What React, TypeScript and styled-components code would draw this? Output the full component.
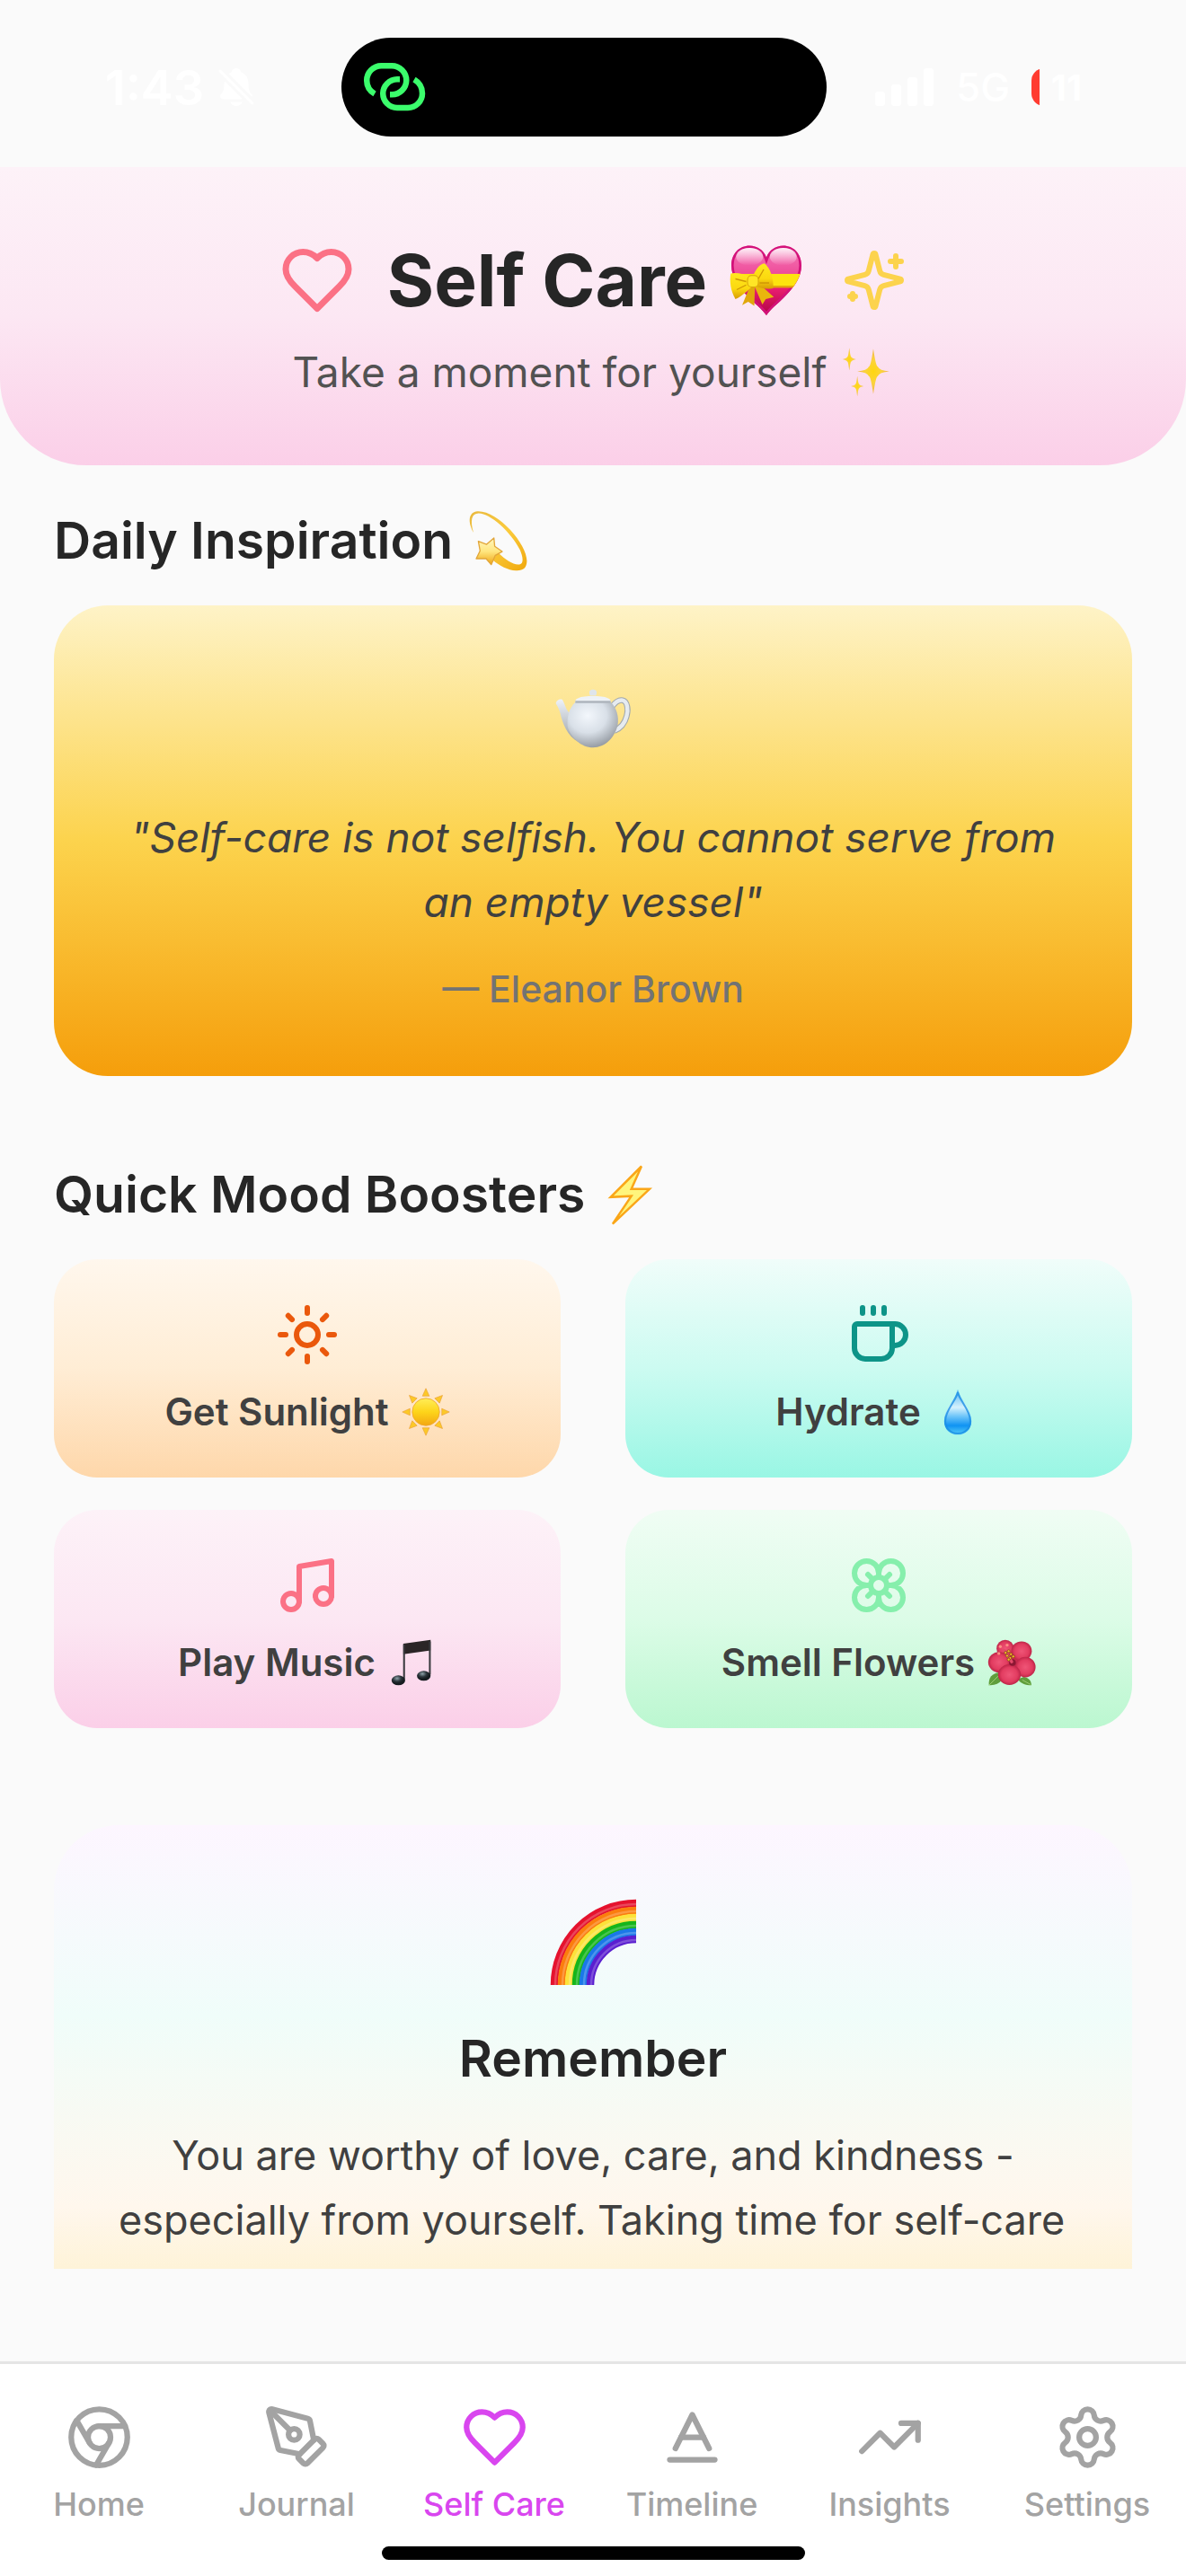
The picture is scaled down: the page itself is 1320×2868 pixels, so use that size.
import React from "react";
import styled, { createGlobalStyle } from "styled-components";
import { Baseline, Chromium, Coffee, Flower, Music, PenTool, Settings, Sun, TrendingUp } from "lucide-react";
import { IoNotificationsOff } from "react-icons/io5";

const color = {
  page: "#fafafa",
  ink: "#262626",
  body: "#404040",
  soft: "#525252",
  muted: "#737373",
  faint: "#a3a3a3",
  accent: "#d946ef",
  rose: "#fb7185",
  line: "#e5e5e5",
};

const GlobalStyle = createGlobalStyle`
  *, *::before, *::after { box-sizing: border-box; }
  body {
    margin: 0;
    background: ${color.page};
    font-family: Inter, "Liberation Sans", sans-serif;
    color: ${color.ink};
  }
  h1, h2, p, blockquote, figure { margin: 0; }
  svg { display: block; flex: none; }
`;

const Screen = styled.div`
  display: flex;
  flex-direction: column;
  min-height: 100vh;
`;

/* ---------- status bar ---------- */

const StatusBar = styled.div`
  display: grid;
  grid-template-columns: 19fr 540px 20fr;
  align-items: center;
  height: 186px;
  padding-top: 8px;
  color: #ffffff;
  font-weight: 600;
`;

const StatusLeft = styled.div`
  display: flex;
  align-items: center;
  justify-content: center;
  gap: 12px;
  padding-left: 24px;
  font-size: 54px;
`;

const StatusRight = styled.div`
  display: flex;
  align-items: center;
  gap: 24px;
  padding-left: 54px;
  font-size: 44px;
  font-weight: 500;
`;

const Island = styled.div`
  display: flex;
  align-items: center;
  height: 110px;
  padding-left: 22px;
  border-radius: 55px;
  background: #000000;
`;

const Battery = styled.div`
  display: flex;
  align-items: center;
  justify-content: center;
  width: 78px;
  height: 42px;
  border-radius: 14px;
  background: linear-gradient(90deg, #ff3b30 9px, transparent 9px);
  font-size: 40px;
  font-weight: 700;
`;

/* ---------- header ---------- */

const Header = styled.header`
  display: flex;
  flex-direction: column;
  align-items: center;
  gap: 18px;
  padding: 72px 60px 74px;
  border-radius: 0 0 96px 96px;
  background: linear-gradient(#fdf2f8, #fce7f3 50%, #fbcfe8);
`;

const TitleRow = styled.div`
  display: flex;
  align-items: center;
  gap: 36px;
`;

const Title = styled.h1`
  display: flex;
  align-items: center;
  gap: 18px;
  font-size: 80px;
  line-height: 108px;
  font-weight: 700;
`;

const Subtitle = styled.p`
  display: flex;
  align-items: center;
  gap: 14px;
  font-size: 46px;
  line-height: 60px;
  color: ${color.soft};
`;

/* ---------- content ---------- */

const Content = styled.main`
  display: flex;
  flex-direction: column;
  flex: 1;
  gap: 96px;
  padding: 48px 60px 102px;
`;

const Section = styled.section`
  display: flex;
  flex-direction: column;
  gap: 36px;
`;

const SectionTitle = styled.h2`
  display: flex;
  align-items: center;
  gap: 14px;
  font-size: 57px;
  line-height: 72px;
  font-weight: 600;
`;

const QuoteCard = styled.figure`
  display: flex;
  flex-direction: column;
  align-items: center;
  padding: 72px;
  border-radius: 60px;
  background: linear-gradient(#fef3c7, #fcd34d 50%, #f59e0b);
  text-align: center;
`;

const QuoteArt = styled.div`
  display: flex;
  align-items: center;
  height: 108px;
  margin-bottom: 42px;
`;

const Quote = styled.blockquote`
  font-size: 46px;
  line-height: 72px;
  font-style: italic;
  color: ${color.body};
`;

const Author = styled.figcaption`
  margin-top: 36px;
  font-size: 41px;
  line-height: 50px;
  font-weight: 500;
  color: ${color.muted};
`;

const BoosterGrid = styled.div`
  display: grid;
  grid-template-columns: 1fr 1fr;
  gap: 36px 72px;
`;

const Booster = styled.button<{ $from: string; $mid: string; $to: string; $tint: string }>`
  display: flex;
  flex-direction: column;
  align-items: center;
  gap: 24px;
  padding: 48px 24px;
  border: 0;
  border-radius: 48px;
  background: linear-gradient(${(p) => p.$from}, ${(p) => p.$mid} 50%, ${(p) => p.$to});
  color: ${(p) => p.$tint};
  font-family: inherit;
  cursor: pointer;
`;

const BoosterLabel = styled.span`
  display: flex;
  align-items: center;
  gap: 14px;
  height: 51px;
  font-size: 42px;
  line-height: 51px;
  font-weight: 600;
  color: ${color.body};
`;

const RememberCard = styled.section`
  display: flex;
  flex-direction: column;
  align-items: center;
  margin-top: 12px;
  padding: 72px 72px 18px;
  border-radius: 72px 72px 0 0;
  background: linear-gradient(#fdf6ff, #f0fdfa 43%, #fff7ed 86%, #fef3d8);
`;

const RememberArt = styled.div`
  display: flex;
  align-items: center;
  height: 116px;
  margin-bottom: 36px;
`;

const RememberText = styled.p`
  align-self: stretch;
  margin-top: 36px;
  overflow: hidden;
  font-size: 45px;
  line-height: 72px;
  color: ${color.body};
  text-align: center;
`;

const CutLine = styled.span`
  display: block;
  text-align: left;
  white-space: nowrap;
`;

/* ---------- tab bar ---------- */

const TabBar = styled.footer`
  border-top: 3px solid ${color.line};
  padding: 44px 0 18px;
  background: #ffffff;
`;

const Tabs = styled.nav`
  display: flex;
`;

const Tab = styled.a<{ $active?: boolean }>`
  display: flex;
  flex: 1;
  flex-direction: column;
  align-items: center;
  gap: 15px;
  font-size: 36px;
  line-height: 45px;
  font-weight: 500;
  text-decoration: none;
  color: ${(p) => (p.$active ? color.accent : color.faint)};
`;

const HomeIndicator = styled.div`
  width: 471px;
  height: 15px;
  margin: 24px auto 0;
  border-radius: 8px;
  background: #000000;
`;

/* ---------- line icons ---------- */

const stroke = {
  fill: "none",
  stroke: "currentColor",
  strokeWidth: 2,
  strokeLinecap: "round" as const,
  strokeLinejoin: "round" as const,
};

const HeartIcon = ({ size, tint = "currentColor" }: { size: number; tint?: string }) => (
  <svg width={size} height={size} viewBox="0 0 24 24" {...stroke} stroke={tint} aria-hidden="true">
    <path d="M19 14c1.49-1.46 3-3.21 3-5.5A5.5 5.5 0 0 0 16.5 3c-1.76 0-3 .5-4.5 2-1.5-1.5-2.74-2-4.5-2A5.5 5.5 0 0 0 2 8.5c0 2.3 1.5 4.05 3 5.5l7 7Z" />
  </svg>
);

const SparklesIcon = () => (
  <svg width={72} height={72} viewBox="0 0 24 24" {...stroke} stroke="#fcd34d" aria-hidden="true">
    <path d="M9.937 15.5A2 2 0 0 0 8.5 14.063l-6.135-1.582a.5.5 0 0 1 0-.962L8.5 9.936A2 2 0 0 0 9.937 8.5l1.582-6.135a.5.5 0 0 1 .963 0L14.063 8.5A2 2 0 0 0 15.5 9.937l6.135 1.581a.5.5 0 0 1 0 .964L15.5 14.063a2 2 0 0 0-1.437 1.437l-1.582 6.135a.5.5 0 0 1-.963 0z" />
    <path d="M20 3v4M22 5h-4M4 17v2M5 18H3" />
  </svg>
);

const LinkIcon = () => (
  <svg width={74} height={60} viewBox="401 67 74 60" fill="none" stroke="#3bfd6c" strokeWidth={6.5} aria-hidden="true">
    <path d="M416 104.500C410 101 407.200 96 407.200 89.500A16.300 16.300 0 0 1 423.500 73.200H435A16.300 16.300 0 0 1 451.300 89.500A16 16 0 0 1 435.300 105.200H433" />
    <path d="M444 88.300H441A16 16 0 0 0 425.200 104A16 16 0 0 0 441 120H453A16 16 0 0 0 469 104C469 98 466 92 460 88.500" />
  </svg>
);

const SignalIcon = () => (
  <svg width={66} height={42} viewBox="0 0 66 42" fill="currentColor" aria-hidden="true">
    <rect x="0" y="26" width="11" height="16" rx="3" />
    <rect x="18" y="18" width="11" height="24" rx="3" />
    <rect x="36" y="10" width="11" height="32" rx="3" />
    <rect x="54" y="0" width="11" height="42" rx="3" />
  </svg>
);

/* ---------- emoji drawings ---------- */

type EmojiProps = { size: number; label: string; children: React.ReactNode };

const Emoji = ({ size, label, children }: EmojiProps) => (
  <svg width={size} height={size} viewBox="0 0 64 64" role="img" aria-label={label}>
    {children}
  </svg>
);

const star4 = (x: number, y: number, w: number, h: number) => {
  const a = w * 0.27;
  const b = h * 0.22;
  return `M${x} ${y - h}Q${x + a * 0.6} ${y - b} ${x + a} ${y - b}Q${x + a * 1.4} ${y - 1} ${x + w} ${y}Q${x + a * 1.4} ${y + 1} ${x + a} ${y + b}Q${x + a * 0.6} ${y + b} ${x} ${y + h}Q${x - a * 0.6} ${y + b} ${x - a} ${y + b}Q${x - a * 1.4} ${y + 1} ${x - w} ${y}Q${x - a * 1.4} ${y - 1} ${x - a} ${y - b}Q${x - a * 0.6} ${y - b} ${x} ${y - h}Z`;
};

const GIFT_HEART =
  "M32 58C27 50 6 38 6 21C6 12 12 6.300 19.500 6.300C25 6.300 30 9.500 32 15C34 9.500 39 6.300 44.500 6.300C52 6.300 58 12 58 21C58 38 37 50 32 58Z";

const GiftHeart = () => (
  <Emoji size={96} label="Heart with ribbon">
    <defs>
      <linearGradient id="gh-fill" x1="0" y1="0" x2="0" y2="1">
        <stop offset="0" stopColor="#f67cba" />
        <stop offset="0.4" stopColor="#ee4d9a" />
        <stop offset="0.6" stopColor="#ec1f72" />
        <stop offset="1" stopColor="#b00343" />
      </linearGradient>
      <linearGradient id="gh-shine" x1="0" y1="0" x2="0" y2="1">
        <stop offset="0" stopColor="#ffffff" stopOpacity="0.9" />
        <stop offset="1" stopColor="#ffffff" stopOpacity="0" />
      </linearGradient>
      <linearGradient id="gh-bow" x1="0" y1="0" x2="0" y2="1">
        <stop offset="0" stopColor="#ffe81f" />
        <stop offset="0.6" stopColor="#fbd80f" />
        <stop offset="1" stopColor="#d79a05" />
      </linearGradient>
      <clipPath id="gh-clip">
        <path d={GIFT_HEART} />
      </clipPath>
    </defs>
    <path d={GIFT_HEART} fill="url(#gh-fill)" />
    <g clipPath="url(#gh-clip)">
      <path d={GIFT_HEART} fill="none" stroke="#d3127a" strokeWidth="3.500" />
      <ellipse cx="19.500" cy="14.500" rx="10" ry="6.500" fill="url(#gh-shine)" />
      <ellipse cx="44.500" cy="14.500" rx="10" ry="6.500" fill="url(#gh-shine)" />
      <rect x="4" y="27.300" width="56" height="10" fill="#fde40e" />
      <rect x="4" y="36" width="56" height="1.600" fill="#e3a60c" />
    </g>
    <path d="M20 36L14 50.500L18.500 48L23 51L23.500 37Z" fill="#e0a70c" />
    <path d="M23 36L29 50L31.500 46L37.500 44.500L27 35Z" fill="#e9b60d" />
    <path d="M21 30C15 27 9 26 5.500 27C4.500 33 5.500 40 9 46C14 44 19 39 22 36Z" fill="url(#gh-bow)" />
    <path d="M22 29C24 24 27 20 30.500 19.500C35 23 37.500 31 37 38C32 39 27 38 24 36Z" fill="url(#gh-bow)" />
    <path d="M9 31L17 33M10 39L17 35.500M30 24L26 31M34 34L27 34" stroke="#cf9706" strokeWidth="0.900" fill="none" />
    <rect x="18" y="28.500" width="8" height="8.500" rx="3" fill="#ffe526" stroke="#d9a50a" strokeWidth="0.700" />
  </Emoji>
);

const SparklesEmoji = () => (
  <Emoji size={60} label="Sparkles">
    <defs>
      <radialGradient id="sp-fill">
        <stop offset="0" stopColor="#ffd60f" />
        <stop offset="0.500" stopColor="#fbd33c" />
        <stop offset="1" stopColor="#efb24c" />
      </radialGradient>
    </defs>
    <path d={star4(40.5, 31.5, 19, 27)} fill="url(#sp-fill)" />
    <path d={star4(12, 17, 8, 13.5)} fill="url(#sp-fill)" />
    <path d={star4(21.5, 49, 7.5, 12)} fill="url(#sp-fill)" />
  </Emoji>
);

const DizzyEmoji = () => (
  <Emoji size={72} label="Dizzy star">
    <defs>
      <linearGradient id="dz-ring" x1="0" y1="0" x2="1" y2="1">
        <stop offset="0" stopColor="#e9b93f" />
        <stop offset="0.500" stopColor="#fbcb3c" />
        <stop offset="1" stopColor="#f0a80d" />
      </linearGradient>
      <linearGradient id="dz-star" x1="0" y1="0" x2="0" y2="1">
        <stop offset="0" stopColor="#fff6c0" />
        <stop offset="0.500" stopColor="#ffe680" />
        <stop offset="1" stopColor="#efa512" />
      </linearGradient>
    </defs>
    <path
      d="M8 24C2 13 3 3.500 12 2.800C32 2 61 35 60.800 52C60.700 59 57 61.800 50 61.500C42 61 34 57 27 51L32 43.500C40 51 48 56.500 53.500 55.500C58 54.500 57 48 54 41C45 23 24 4.500 13 4.800C6 5 4.500 12 8 24Z"
      fill="url(#dz-ring)"
    />
    <path
      d="M12.800 32.600L21 35.600L28.200 29.300L29 37.600L36.400 42.700L29.600 46.500L25.500 55.700L20.500 49.800L10.700 49.800L14.500 42Z"
      fill="url(#dz-star)"
      stroke="#e2a63a"
      strokeWidth="1.200"
      strokeLinejoin="round"
    />
  </Emoji>
);

const TeapotEmoji = () => (
  <Emoji size={84} label="Teapot">
    <defs>
      <radialGradient id="tp-body" cx="0.400" cy="0.300" r="0.750">
        <stop offset="0" stopColor="#f3f7fc" />
        <stop offset="0.500" stopColor="#d9e0e8" />
        <stop offset="1" stopColor="#8d939b" />
      </radialGradient>
      <linearGradient id="tp-spout" x1="0" y1="0" x2="0" y2="1">
        <stop offset="0" stopColor="#eef2f8" />
        <stop offset="1" stopColor="#9aa1a9" />
      </linearGradient>
    </defs>
    <path d="M48 22C51 18 54 16 57 16.500C61.500 17.500 62 25 60.500 30C59 36 56 40 50 42.500" fill="none" stroke="#a0a7ad" strokeWidth="5" />
    <path d="M48 22C51 18 54 16 57 16.500C61.500 17.500 62 25 60.500 30C59 36 56 40 50 42.500" fill="none" stroke="#e6ebf0" strokeWidth="3.400" />
    <path d="M0.500 19C1 16.500 4 15 6 16C8.500 20 9 25 12.500 27.500L19 24L20 52C10 47 6 35 4.500 28.500C3.500 24 2 22 0.500 19Z" fill="url(#tp-spout)" />
    <path d="M17 18H47C52 23 54 30 53 37C51 48 42 56.600 32 56.600C22 56.600 13 48 10.500 39C9.500 30 12 23 17 18Z" fill="url(#tp-body)" />
    <path d="M17 18C17 16 18 15 20 14.500C24 12.500 40 12.500 44 14.500C46 15 47 16 47 18Z" fill="#eef2f7" />
    <path d="M17 17H47V18.800H17Z" fill="#aeb5bd" />
    <path d="M29.500 12.500C28 9 29.500 7.500 32 7.500C34.500 7.500 36 9 34.500 12.500Z" fill="#dfe5eb" />
  </Emoji>
);

const BoltEmoji = () => (
  <Emoji size={72} label="High voltage">
    <path
      d="M43.500 4L33.500 26.500H51.500L15 61L33.500 33.500L13 34.500Z"
      fill="#fff57c"
      stroke="#faa618"
      strokeWidth="2.200"
      strokeLinejoin="miter"
    />
  </Emoji>
);

const SunEmoji = () => (
  <Emoji size={54} label="Sun">
    <defs>
      <linearGradient id="sn-fill" x1="0" y1="0" x2="0" y2="1">
        <stop offset="0" stopColor="#ffee58" />
        <stop offset="0.500" stopColor="#fdd41a" />
        <stop offset="1" stopColor="#f3a712" />
      </linearGradient>
    </defs>
    {[0, 45, 90, 135, 180, 225, 270, 315].map((turn) => (
      <path key={turn} d="M32 1L36.500 11H27.500Z" transform={`rotate(${turn} 32 32)`} fill="#fcc928" stroke="#eba23a" strokeWidth="0.800" />
    ))}
    <circle cx="32" cy="32" r="18" fill="url(#sn-fill)" stroke="#f0a830" />
  </Emoji>
);

const DropEmoji = () => (
  <Emoji size={54} label="Droplet">
    <defs>
      <linearGradient id="dr-fill" x1="0" y1="0" x2="0" y2="1">
        <stop offset="0" stopColor="#4db4f2" />
        <stop offset="0.400" stopColor="#d5f1fd" />
        <stop offset="0.600" stopColor="#6cc4f9" />
        <stop offset="0.800" stopColor="#0f93f3" />
        <stop offset="1" stopColor="#58cdf8" />
      </linearGradient>
    </defs>
    <path d="M32 2C35 16 50 28 50 44C50 55 42 62 32 62C22 62 14 55 14 44C14 28 29 16 32 2Z" fill="url(#dr-fill)" />
    <path d="M32 6C34.500 18 48.500 29 48.500 44C48.500 54 41 60.500 32 60.500C23 60.500 15.500 54 15.500 44C15.500 29 29.500 18 32 6Z" fill="none" stroke="#1d8fe3" strokeWidth="2.400" opacity="0.800" />
  </Emoji>
);

const NotesEmoji = () => (
  <Emoji size={54} label="Musical notes">
    <defs>
      <radialGradient id="nt-head" cx="0.400" cy="0.300">
        <stop offset="0" stopColor="#8fa2aa" />
        <stop offset="0.600" stopColor="#2d373d" />
        <stop offset="1" stopColor="#161c20" />
      </radialGradient>
    </defs>
    <path d="M20 7L56 2V16L20 21Z" fill="#2a2526" />
    <path d="M21 8V54M55 4V48" stroke="#38393d" strokeWidth="2.400" />
    <ellipse cx="13.500" cy="55.500" rx="9" ry="6.500" fill="url(#nt-head)" />
    <ellipse cx="47" cy="49.500" rx="9" ry="6.500" fill="url(#nt-head)" />
  </Emoji>
);

const HibiscusEmoji = () => (
  <Emoji size={54} label="Hibiscus">
    <defs>
      <radialGradient id="hb-petal">
        <stop offset="0" stopColor="#ef5577" />
        <stop offset="0.700" stopColor="#e23c60" />
        <stop offset="1" stopColor="#bd2447" />
      </radialGradient>
    </defs>
    <path d="M2 62C1 52 6 46 16 45L18 56C14 61 8 62 2 62Z" fill="#5f9e3c" />
    <path d="M58 62C58 56 54 52 48 51L40 54C44 60 50 62 58 62Z" fill="#5f9e3c" />
    <path d="M2 62L14 50M57 61L46 55" stroke="#a7d37a" strokeWidth="1" />
    <circle cx="32" cy="31" r="13" fill="#c92a4d" />
    <ellipse cx="23.500" cy="13.500" rx="11.500" ry="11.500" fill="url(#hb-petal)" />
    <ellipse cx="45" cy="17" rx="13.500" ry="13" fill="url(#hb-petal)" />
    <ellipse cx="15.500" cy="31.500" rx="14.500" ry="13.500" fill="url(#hb-petal)" />
    <ellipse cx="50" cy="38" rx="13.500" ry="13.500" fill="url(#hb-petal)" />
    <ellipse cx="29" cy="48" rx="15" ry="13.500" fill="url(#hb-petal)" />
    <circle cx="33" cy="32" r="4.500" fill="#8c1733" />
    <path d="M32 31L22 16" stroke="#e34a69" strokeWidth="4" strokeLinecap="round" />
    {[[24, 19], [28, 17], [31, 21], [26, 23], [30, 26], [34, 24], [28, 28]].map(([x, y]) => (
      <circle key={`${x}-${y}`} cx={x} cy={y} r="1.800" fill="#f6b92c" stroke="#6d3a10" strokeWidth="0.700" />
    ))}
    <circle cx="17" cy="11" r="2" fill="#fb8f84" />
    <circle cx="26" cy="9" r="2" fill="#fb8f84" />
    <circle cx="15" cy="20" r="2" fill="#fb8f84" />
  </Emoji>
);

const RAINBOW = ["#e5122e", "#fb7d0d", "#fce23b", "#16b51b", "#1a78e8", "#5a1fd0"];

/* Only the left half of the arch falls inside the glyph box. */
const RainbowEmoji = () => (
  <svg width={96} height={96} viewBox="0 0 96 96" role="img" aria-label="Rainbow">
    {RAINBOW.map((band, i) => {
      const r = 91 - i * 8;
      return (
        <path key={band} d={`M${96 - r} 96A${r} ${r} 0 0 1 96 ${96 - r}`} fill="none" stroke={band} strokeWidth="8.500" />
      );
    })}
    {RAINBOW.map((band, i) => {
      const r = 90 - i * 8;
      return (
        <path key={band} d={`M${96 - r} 96A${r} ${r} 0 0 1 96 ${96 - r}`} fill="none" stroke="#ffffff" strokeOpacity="0.220" strokeWidth="2.500" />
      );
    })}
  </svg>
);

/* ---------- data ---------- */

const boosters = [
  { name: "Get Sunlight", icon: Sun, emoji: <SunEmoji />, from: "#fff7ed", mid: "#ffedd5", to: "#fed7aa", tint: "#ea580c" },
  { name: "Hydrate", icon: Coffee, emoji: <DropEmoji />, from: "#f0fdfa", mid: "#ccfbf1", to: "#99f6e4", tint: "#0d9488" },
  { name: "Play Music", icon: Music, emoji: <NotesEmoji />, from: "#fdf2f8", mid: "#fce7f3", to: "#fbcfe8", tint: color.rose },
  { name: "Smell Flowers", icon: Flower, emoji: <HibiscusEmoji />, from: "#f0fdf4", mid: "#dcfce7", to: "#bbf7d0", tint: "#86efac" },
];

const tabs = [
  { name: "Home", icon: <Chromium size={75} /> },
  { name: "Journal", icon: <PenTool size={75} /> },
  { name: "Self Care", icon: <HeartIcon size={75} />, active: true },
  { name: "Timeline", icon: <Baseline size={75} /> },
  { name: "Insights", icon: <TrendingUp size={75} /> },
  { name: "Settings", icon: <Settings size={75} /> },
];

export default function App() {
  return (
    <Screen>
      <GlobalStyle />
      <StatusBar>
        <StatusLeft>
          <span>1:43</span>
          <IoNotificationsOff size={48} aria-label="Silent mode" />
        </StatusLeft>
        <Island>
          <LinkIcon />
        </Island>
        <StatusRight>
          <SignalIcon />
          <span>5G</span>
          <Battery>11</Battery>
        </StatusRight>
      </StatusBar>

      <Header>
        <TitleRow>
          <HeartIcon size={84} tint={color.rose} />
          <Title>
            Self Care
            <GiftHeart />
          </Title>
          <SparklesIcon />
        </TitleRow>
        <Subtitle>
          Take a moment for yourself
          <SparklesEmoji />
        </Subtitle>
      </Header>

      <Content>
        <Section>
          <SectionTitle>
            Daily Inspiration
            <DizzyEmoji />
          </SectionTitle>
          <QuoteCard>
            <QuoteArt>
              <TeapotEmoji />
            </QuoteArt>
            <Quote>"Self-care is not selfish. You cannot serve from an empty vessel"</Quote>
            <Author>— Eleanor Brown</Author>
          </QuoteCard>
        </Section>

        <Section>
          <SectionTitle>
            Quick Mood Boosters
            <BoltEmoji />
          </SectionTitle>
          <BoosterGrid>
            {boosters.map(({ name, icon: Icon, emoji, from, mid, to, tint }) => (
              <Booster key={name} type="button" $from={from} $mid={mid} $to={to} $tint={tint}>
                <Icon size={72} aria-hidden="true" />
                <BoosterLabel>
                  {name}
                  {emoji}
                </BoosterLabel>
              </Booster>
            ))}
          </BoosterGrid>
        </Section>

        <RememberCard>
          <RememberArt>
            <RainbowEmoji />
          </RememberArt>
          <SectionTitle>Remember</SectionTitle>
          <RememberText>
            You are worthy of love, care, and kindness -
            <CutLine>especially from yourself. Taking time for self-care</CutLine>
          </RememberText>
        </RememberCard>
      </Content>

      <TabBar>
        <Tabs aria-label="Main">
          {tabs.map(({ name, icon, active }) => (
            <Tab key={name} href="#" $active={active} aria-current={active ? "page" : undefined}>
              {icon}
              {name}
            </Tab>
          ))}
        </Tabs>
        <HomeIndicator />
      </TabBar>
    </Screen>
  );
}
